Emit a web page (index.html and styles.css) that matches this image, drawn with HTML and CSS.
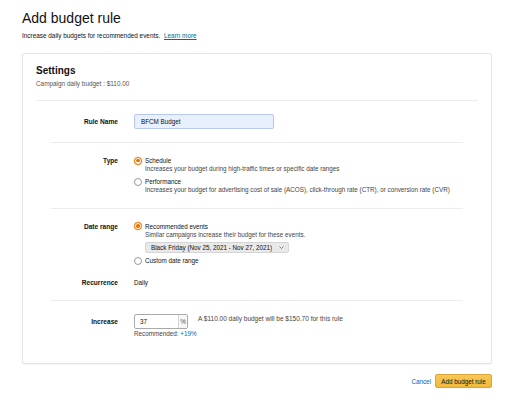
FILE: index.html
```html
<!DOCTYPE html>
<html>
<head>
<meta charset="utf-8">
<link rel="stylesheet" href="styles.css">
</head>
<body>
<div class="page">
  <h1 class="title">Add budget rule</h1>
  <p class="subtitle">Increase daily budgets for recommended events. <a class="link" href="#">Learn more</a></p>

  <section class="card">
    <header class="card-head">
      <h2 class="card-title">Settings</h2>
      <p class="meta">Campaign daily budget : $110.00</p>
    </header>

    <div class="rows">
      <div class="section">
        <div class="row">
          <div class="label label-input">Rule Name</div>
          <div class="field">
            <div class="text-input">BFCM Budget</div>
          </div>
        </div>
      </div>

      <div class="section">
        <div class="row">
          <div class="label">Type</div>
          <div class="field options">
            <div class="option">
              <div class="radio-line"><span class="radio checked"></span><span>Schedule</span></div>
              <div class="desc">Increases your budget during high-traffic times or specific date ranges</div>
            </div>
            <div class="option">
              <div class="radio-line"><span class="radio"></span><span>Performance</span></div>
              <div class="desc">Increases your budget for advertising cost of sale (ACOS), click-through rate (CTR), or conversion rate (CVR)</div>
            </div>
          </div>
        </div>
      </div>

      <div class="section group">
        <div class="row">
          <div class="label">Date range</div>
          <div class="field">
            <div class="option">
              <div class="radio-line"><span class="radio checked"></span><span>Recommended events</span></div>
              <div class="desc">Similar campaigns increase their budget for these events.</div>
              <div class="dropdown-wrap">
                <div class="dropdown">
                  <span>Black Friday (Nov 25, 2021 - Nov 27, 2021)</span>
                  <svg class="chev" width="5" height="3" viewBox="0 0 5 3"><path d="M0.5 0.5 L2.5 2.5 L4.5 0.5" fill="none" stroke="#555" stroke-width="0.7"/></svg>
                </div>
              </div>
            </div>
            <div class="option option-gap">
              <div class="radio-line"><span class="radio"></span><span>Custom date range</span></div>
            </div>
          </div>
        </div>
        <div class="row">
          <div class="label">Recurrence</div>
          <div class="field"><div class="plain">Daily</div></div>
        </div>
      </div>

      <div class="section">
        <div class="row">
          <div class="label label-input">Increase</div>
          <div class="field">
            <div class="increase-line">
              <div class="pct-input">
                <span class="pct-value">37</span>
                <span class="pct-addon">%</span>
              </div>
              <span class="hint">A $110.00 daily budget will be $150.70 for this rule</span>
            </div>
            <div class="recommend">Recommended: <span class="blue">+19%</span></div>
          </div>
        </div>
      </div>
    </div>
  </section>

  <div class="actions">
    <a class="cancel" href="#">Cancel</a>
    <button class="primary">Add budget rule</button>
  </div>
</div>
</body>
</html>
```

FILE: styles.css
```css
* { box-sizing: border-box; }
html, body { margin: 0; padding: 0; background: #fff; }
body {
  font-family: "Liberation Sans", Arial, sans-serif;
  color: #111;
}
.page {
  width: 512px;
  padding: 10px 20px 0 22px;
}
.title {
  margin: 0;
  font-size: 14px;
  line-height: 17px;
  font-weight: 400;
  color: #111;
}
.subtitle {
  margin: 4px 0 0;
  font-size: 6.4px;
  line-height: 9px;
  color: #111;
}
.link {
  color: #007185;
  text-decoration: underline;
  margin-left: 2px;
}
.card {
  margin-top: 13px;
  width: 470px;
  border: 1px solid #e4e4e4;
  border-radius: 2px;
  box-shadow: 0 1px 1px rgba(0,0,0,0.04);
  padding: 11px 13px 12px;
}
.card-head {
  border-bottom: 1px solid #ececec;
  padding-bottom: 13px;
}
.card-title {
  margin: 0;
  font-size: 10px;
  line-height: 12px;
  font-weight: 700;
}
.meta {
  margin: 3px 0 0;
  font-size: 6.4px;
  line-height: 7px;
  color: #555;
}
.rows {
  margin: 0 15px;
}
.section {
  padding: 13px 0;
  border-top: 1px solid #ececec;
}
.section:first-child { border-top: none; }
.group {
  display: flex;
  flex-direction: column;
  gap: 13px;
}
.row {
  display: grid;
  grid-template-columns: 67px 1fr;
  column-gap: 16px;
  align-items: start;
}
.label {
  text-align: right;
  font-size: 6.6px;
  line-height: 9px;
  font-weight: 700;
  color: #111;
}
.label-input { line-height: 15px; }
.field {
  font-size: 6.3px;
  color: #111;
}
.text-input {
  width: 140px;
  height: 15px;
  background: #e8f0fe;
  border: 1px solid #b6c9ea;
  border-radius: 2px;
  padding: 0 6px;
  line-height: 13px;
  font-size: 6.3px;
  color: #111;
}
.options {
  display: flex;
  flex-direction: column;
  gap: 3.5px;
}
.radio-line {
  display: flex;
  align-items: center;
  gap: 3px;
  height: 9px;
  line-height: 9px;
}
.radio {
  width: 8px;
  height: 8px;
  border-radius: 50%;
  border: 0.8px solid #9a9a9a;
  background: #fff;
  flex: none;
  position: relative;
}
.radio.checked {
  border-color: #e77600;
  box-shadow: 0 0 1.5px rgba(228,121,17,0.6);
}
.radio.checked::after {
  content: "";
  position: absolute;
  left: 50%;
  top: 50%;
  width: 3.4px;
  height: 3.4px;
  margin: -1.7px 0 0 -1.7px;
  border-radius: 50%;
  background: #e77600;
}
.desc {
  padding-left: 11px;
  line-height: 8.5px;
  color: #444;
}
.dropdown-wrap {
  padding-left: 11px;
  margin-top: 3px;
}
.dropdown {
  display: inline-flex;
  align-items: center;
  gap: 6px;
  height: 11px;
  padding: 0 4px 0 5px;
  width: 144px;
  background: #e9e9e9;
  border: 0.6px solid #d5d5d5;
  border-radius: 2px;
  color: #111;
  font-size: 6.3px;
}
.chev { margin-left: auto; }
.option-gap { margin-top: 3px; }
.plain { line-height: 9px; }
.increase-line {
  display: flex;
  align-items: flex-start;
  gap: 10px;
}
.pct-input {
  display: flex;
  width: 54px;
  height: 15px;
  border: 1px solid #a9a9a9;
  border-radius: 2px;
  background: #fff;
  overflow: hidden;
}
.pct-value {
  flex: 1;
  padding-left: 5px;
  line-height: 13px;
}
.pct-addon {
  width: 9px;
  border-left: 1px solid #d5d5d5;
  background: #f7f7f7;
  text-align: center;
  line-height: 13px;
  color: #555;
}
.hint {
  font-size: 6.5px;
  line-height: 9px;
  color: #444;
}
.recommend {
  margin-top: 1px;
  line-height: 8px;
  color: #444;
}
.blue { color: #0066c0; }
.actions {
  width: 470px;
  display: flex;
  justify-content: flex-end;
  align-items: center;
  gap: 4px;
  margin-top: 10px;
}
.cancel {
  color: #0066c0;
  text-decoration: none;
  font-size: 6.3px;
}
.primary {
  height: 14px;
  width: 57px;
  padding: 0;
  border: 0.6px solid #d9a63b;
  border-radius: 2px;
  background: linear-gradient(#f7c756, #f0b93a);
  color: #111;
  font-family: "Liberation Sans", Arial, sans-serif;
  font-size: 6.3px;
  font-weight: 500;
}
```
